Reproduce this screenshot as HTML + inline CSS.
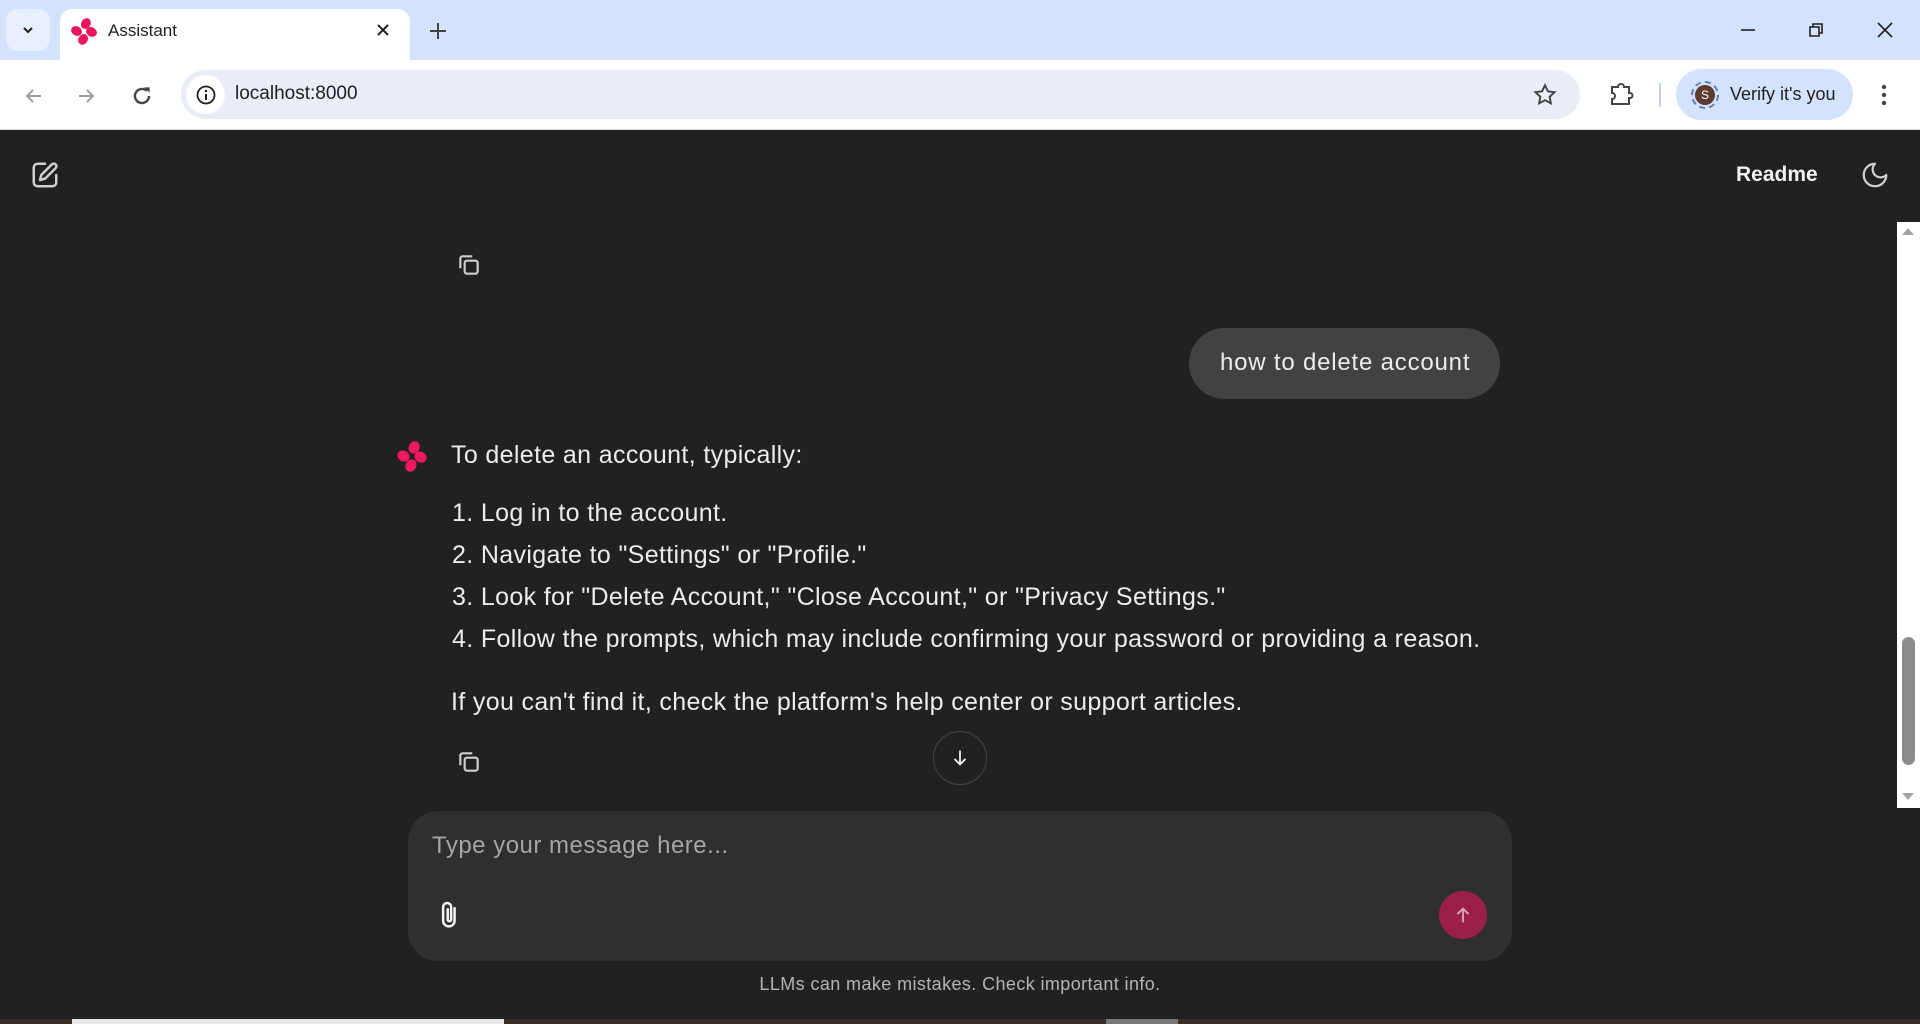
<!DOCTYPE html>
<html><head><meta charset="utf-8"><style>
*{margin:0;padding:0;box-sizing:border-box}
html,body{width:1920px;height:1024px;overflow:hidden;background:#212121;font-family:"Liberation Sans",Arial,sans-serif}
.abs{position:absolute}
#tabbar{left:0;top:0;width:1920px;height:60px;background:#d3e3fd}
#toolbar{left:0;top:60px;width:1920px;height:70px;background:#fff;border-bottom:1px solid #dadce0}
#main{left:0;top:131px;width:1920px;height:893px;background:#212121}
.txt{color:#ececec;font-size:25px;letter-spacing:0.35px;white-space:nowrap;position:absolute}
</style></head><body>
<div class="abs" id="tabbar"></div>
<div class="abs" style="left:6px;top:9px;width:44px;height:42px;border-radius:12px;background:#e8f0fe"></div>
<svg class="abs" style="left:20px;top:22px" width="16" height="16" viewBox="0 0 16 16"><path d="M4 6l4 4 4-4" stroke="#1f1f1f" stroke-width="2" fill="none"/></svg>
<div class="abs" style="left:60px;top:9px;width:350px;height:51px;background:#fff;border-radius:12px 12px 0 0"></div>
<svg class="abs" style="left:70px;top:17px" width="28" height="28" viewBox="0 0 30 30"><g fill="#e8175d"><ellipse cx="17" cy="7" rx="5" ry="6" transform="rotate(30 17 7)"/><ellipse cx="7" cy="15" rx="6" ry="5" transform="rotate(30 7 15)"/><ellipse cx="23" cy="16" rx="6" ry="5" transform="rotate(30 23 16)"/><ellipse cx="14" cy="24" rx="5" ry="6" transform="rotate(30 14 24)"/></g></svg>
<div class="abs" style="left:108px;top:21px;font-size:17px;color:#1f1f1f">Assistant</div>
<svg class="abs" style="left:375px;top:22px" width="16" height="16" viewBox="0 0 16 16"><path d="M3 3l10 10M13 3L3 13" stroke="#1f1f1f" stroke-width="2"/></svg>
<svg class="abs" style="left:427px;top:20px" width="22" height="22" viewBox="0 0 22 22"><path d="M11 3v16M3 11h16" stroke="#444" stroke-width="2"/></svg>
<svg class="abs" style="left:1738px;top:20px" width="20" height="20" viewBox="0 0 20 20"><path d="M3 10h14" stroke="#1f1f1f" stroke-width="1.6"/></svg>
<svg class="abs" style="left:1806px;top:20px" width="20" height="20" viewBox="0 0 20 20"><path d="M4 7h9v9H4zM7 7V4h9v9h-3" stroke="#1f1f1f" stroke-width="1.6" fill="none"/></svg>
<svg class="abs" style="left:1875px;top:20px" width="20" height="20" viewBox="0 0 20 20"><path d="M3 3l14 14M17 3L3 17" stroke="#1f1f1f" stroke-width="1.6"/></svg>
<div class="abs" id="toolbar"></div>
<svg class="abs" style="left:22px;top:84px" width="24" height="24" viewBox="0 0 24 24"><path d="M19 12H5M11 6l-6 6 6 6" stroke="#9aa0a6" stroke-width="2" fill="none"/></svg>
<svg class="abs" style="left:74px;top:84px" width="24" height="24" viewBox="0 0 24 24"><path d="M5 12h14M13 6l6 6-6 6" stroke="#9aa0a6" stroke-width="2" fill="none"/></svg>
<svg class="abs" style="left:129px;top:83px" width="26" height="26" viewBox="0 0 24 24"><path d="M18.5 12a6.5 6.5 0 1 1-2-4.7" stroke="#444" stroke-width="2.2" fill="none"/><path d="M14 4h5v5z" fill="#444"/></svg>
<div class="abs" style="left:181px;top:70px;width:1399px;height:49px;border-radius:25px;background:#e9eef6"></div>
<div class="abs" style="left:186px;top:75px;width:39px;height:39px;border-radius:50%;background:#fff"></div>
<svg class="abs" style="left:195px;top:84px" width="22" height="22" viewBox="0 0 22 22"><circle cx="11" cy="11" r="8.5" stroke="#1f1f1f" stroke-width="1.8" fill="none"/><path d="M11 10v6" stroke="#1f1f1f" stroke-width="2"/><circle cx="11" cy="7" r="1.2" fill="#1f1f1f"/></svg>
<div class="abs" style="left:235px;top:83px;font-size:19px;color:#1f1f1f">localhost:8000</div>
<svg class="abs" style="left:1532px;top:82px" width="26" height="26" viewBox="0 0 24 24"><path d="M12 3l2.7 5.6 6.1.8-4.5 4.2 1.1 6.1L12 16.8 6.6 19.7l1.1-6.1L3.2 9.4l6.1-.8z" stroke="#444" stroke-width="1.8" fill="none"/></svg>
<svg class="abs" style="left:1607px;top:80px" width="28" height="28" viewBox="0 0 28 28"><path d="M5 7h6a3 3 0 0 1 6 0h5v6h1a2.5 2.5 0 0 1 0 5h-1v6H5v-5a3 3 0 0 0 0-6z" stroke="#444" stroke-width="2" fill="none"/></svg>
<div class="abs" style="left:1659px;top:83px;width:2px;height:24px;background:#c4d3ec"></div>
<div class="abs" style="left:1676px;top:69px;width:177px;height:51px;border-radius:26px;background:#d3e3fd"></div>
<div class="abs" style="left:1691px;top:81px;width:28px;height:28px;border-radius:50%;border:2px dashed #5f7fb8"></div>
<div class="abs" style="left:1695px;top:85px;width:20px;height:20px;border-radius:50%;background:#5d3a2e;color:#fff;font-size:12px;text-align:center;line-height:20px">S</div>
<div class="abs" style="left:1730px;top:84px;font-size:18px;color:#1f1f1f">Verify it's you</div>
<svg class="abs" style="left:1880px;top:82px" width="8" height="26" viewBox="0 0 8 26"><circle cx="4" cy="5" r="2.2" fill="#444"/><circle cx="4" cy="13" r="2.2" fill="#444"/><circle cx="4" cy="21" r="2.2" fill="#444"/></svg>
<div class="abs" id="main"></div>
<svg class="abs" style="left:30px;top:160px" width="30" height="30" viewBox="0 0 24 24"><path d="M12 3H6a3 3 0 0 0-3 3v12a3 3 0 0 0 3 3h12a3 3 0 0 0 3-3v-6" stroke="#cfcfcf" stroke-width="2" fill="none" stroke-linecap="round"/><path d="M17.5 3.5a2.1 2.1 0 0 1 3 3L12 15l-4 1 1-4z" stroke="#cfcfcf" stroke-width="2" fill="none" stroke-linejoin="round"/></svg>
<div class="abs" style="left:1736px;top:163px;font-size:21px;font-weight:bold;color:#f2f2f2">Readme</div>
<svg class="abs" style="left:1860px;top:160px" width="30" height="30" viewBox="0 0 24 24"><path d="M12 3a6 6 0 0 0 9 9 9 9 0 1 1-9-9z" stroke="#cfcfcf" stroke-width="1.8" fill="none" stroke-linejoin="round"/></svg>
<div class="abs" style="left:1897px;top:222px;width:23px;height:586px;background:#fff"></div>
<svg class="abs" style="left:1901px;top:226px" width="14" height="10"><path d="M1 9L7 2l6 7z" fill="#a3a3a3"/></svg>
<svg class="abs" style="left:1901px;top:792px" width="14" height="10"><path d="M1 1l6 7 6-7z" fill="#a3a3a3"/></svg>
<div class="abs" style="left:1902px;top:637px;width:13px;height:128px;border-radius:7px;background:#8c8c8c"></div>
<svg class="abs" style="left:456px;top:252px" width="26" height="26" viewBox="0 0 24 24"><rect x="8" y="8" width="12" height="12" rx="2" stroke="#cfcfcf" stroke-width="2" fill="none"/><path d="M4 15V6a2 2 0 0 1 2-2h9" stroke="#cfcfcf" stroke-width="2" fill="none"/></svg>
<div class="abs" style="left:1189px;top:328px;width:311px;height:71px;border-radius:36px;background:#424242"></div>
<div class="txt" style="left:1220px;top:349px;font-size:24px;letter-spacing:0.8px">how to delete account</div>
<svg class="abs" style="left:396px;top:440px" width="32" height="32" viewBox="0 0 30 30"><g fill="#f0185f"><ellipse cx="17" cy="7" rx="5" ry="6" transform="rotate(30 17 7)"/><ellipse cx="7" cy="15" rx="6" ry="5" transform="rotate(30 7 15)"/><ellipse cx="23" cy="16" rx="6" ry="5" transform="rotate(30 23 16)"/><ellipse cx="14" cy="24" rx="5" ry="6" transform="rotate(30 14 24)"/></g></svg>
<div class="txt" style="left:451px;top:441px">To delete an account, typically:</div>
<div class="txt" style="left:452px;top:499px">1. Log in to the account.</div>
<div class="txt" style="left:452px;top:541px">2. Navigate to "Settings" or "Profile."</div>
<div class="txt" style="left:452px;top:583px">3. Look for "Delete Account," "Close Account," or "Privacy Settings."</div>
<div class="txt" style="left:452px;top:625px">4. Follow the prompts, which may include confirming your password or providing a reason.</div>
<div class="txt" style="left:451px;top:688px">If you can't find it, check the platform's help center or support articles.</div>
<svg class="abs" style="left:456px;top:749px" width="26" height="26" viewBox="0 0 24 24"><rect x="8" y="8" width="12" height="12" rx="2" stroke="#cfcfcf" stroke-width="2" fill="none"/><path d="M4 15V6a2 2 0 0 1 2-2h9" stroke="#cfcfcf" stroke-width="2" fill="none"/></svg>
<div class="abs" style="left:933px;top:731px;width:54px;height:54px;border-radius:50%;border:1px solid #444;background:#212121"></div>
<svg class="abs" style="left:949px;top:747px" width="22" height="22" viewBox="0 0 24 24"><path d="M12 4v15M6 13l6 6 6-6" stroke="#ececec" stroke-width="2" fill="none"/></svg>
<div class="abs" style="left:408px;top:811px;width:1104px;height:150px;border-radius:30px;background:#2f2f2f"></div>
<div class="abs" style="left:432px;top:832px;font-size:24px;letter-spacing:0.5px;color:#a5a5a5">Type your message here...</div>
<svg class="abs" style="left:436px;top:899px" width="28" height="32" viewBox="0 0 24 28"><path d="M16 8v11a5 5 0 0 1-10 0V7a3.5 3.5 0 0 1 7 0v11a1.5 1.5 0 0 1-3 0V9" stroke="#f2f2f2" stroke-width="2.2" fill="none" stroke-linecap="round"/></svg>
<div class="abs" style="left:1439px;top:891px;width:48px;height:48px;border-radius:50%;background:#9c1f4a"></div>
<svg class="abs" style="left:1452px;top:904px" width="22" height="22" viewBox="0 0 24 24"><path d="M12 20V5M6 11l6-6 6 6" stroke="#d9a8b8" stroke-width="2" fill="none"/></svg>
<div class="abs" style="left:0;top:974px;width:1920px;text-align:center;font-size:18px;letter-spacing:0.4px;color:#b4b4b4">LLMs can make mistakes. Check important info.</div>
<div class="abs" style="left:0;top:1019px;width:1920px;height:5px;background:#3a2e28"></div>
<div class="abs" style="left:72px;top:1019px;width:432px;height:5px;background:#e8e8e8"></div>
<div class="abs" style="left:1106px;top:1019px;width:72px;height:5px;background:#777"></div>
</body></html>
